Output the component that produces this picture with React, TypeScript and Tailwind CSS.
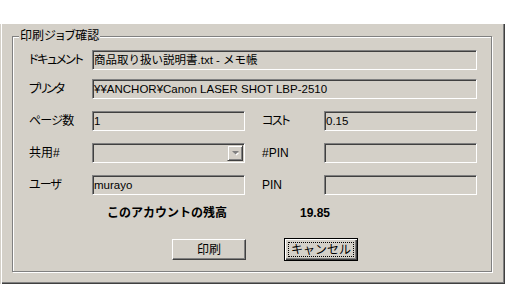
const font = "font-['Liberation_Sans','Noto_Sans_CJK_JP',sans-serif]";

function Label({ children, className = '' }: { children: React.ReactNode; className?: string }): React.ReactElement {
  return (
    <span className={`text-[12px] leading-[14px] text-black whitespace-nowrap [font-feature-settings:'palt'] ${className}`}>
      {children}
    </span>
  );
}

function Field({ value, className = '' }: { value?: string; className?: string }): React.ReactElement {
  return (
    <div
      className={`h-[20px] flex items-center bg-[#d4d0c8] border border-t-[#808080] border-l-[#808080] border-b-white border-r-white shadow-[inset_1px_1px_0_#404040] pl-[1px] text-[11.5px] leading-[14px] text-black whitespace-nowrap overflow-hidden ${className}`}
    >
      {value}
    </div>
  );
}

function ComboField(): React.ReactElement {
  return (
    <div className="h-[20px] flex items-center justify-end bg-[#d4d0c8] border border-t-[#808080] border-l-[#808080] border-b-white border-r-white shadow-[inset_1px_1px_0_#404040] pr-[1px]">
      <div className="w-[16px] h-[16px] flex items-center justify-center border border-t-[#d4d0c8] border-l-[#d4d0c8] border-b-[#404040] border-r-[#404040] shadow-[inset_1px_1px_0_white,inset_-1px_-1px_0_#808080]">
        <svg width="9" height="6" viewBox="0 0 9 6">
          <path d="M2 2 L7 2 L4.5 4.5 Z" fill="#ffffff" transform="translate(1 1)" />
          <path d="M1 1 L8 1 L4.5 4.5 Z" fill="#808080" />
        </svg>
      </div>
    </div>
  );
}

const rowGrid = 'grid grid-cols-[63px_153px_17px_62px_153px] items-center pl-[16px]';

export default function App(): React.ReactElement {
  return (
    <div className={`w-[505px] h-[284px] bg-white ${font}`}>
      <div className="h-[24px]" />
      {/* dialog body */}
      <div className="h-[260px] bg-[#d4d0c8] pt-[12px] pl-[12px] shadow-[inset_1px_0_0_#d4d0c8,inset_2px_0_0_white,inset_-1px_-1px_0_#404040,inset_-2px_-2px_0_#808080]">
        {/* group box */}
        <div className="relative w-[480px] h-[236px] border border-[#808080] shadow-[1px_1px_0_white,inset_1px_1px_0_white] pt-[13px]">
          <span className="absolute -top-[8px] left-[6px] px-[1px] bg-[#d4d0c8] text-[12px] leading-[14px] text-black [font-feature-settings:'palt']">
            印刷ジョブ確認
          </span>

          <div className={rowGrid}>
            <Label className="tracking-[-1.3px]">ドキュメント</Label>
            <Field className="col-span-4" value="商品取り扱い説明書.txt - メモ帳" />
          </div>

          <div className={`${rowGrid} mt-[9px]`}>
            <Label className="tracking-[-2px]">プリンタ</Label>
            <Field className="col-span-4" value="¥¥ANCHOR¥Canon LASER SHOT LBP-2510" />
          </div>

          <div className={`${rowGrid} mt-[12px]`}>
            <Label className="tracking-[-0.8px]">ページ数</Label>
            <Field value="1" />
            <div />
            <Label className="tracking-[-1.5px]">コスト</Label>
            <Field value="0.15" />
          </div>

          <div className={`${rowGrid} mt-[12px]`}>
            <Label>共用#</Label>
            <ComboField />
            <div />
            <Label>#PIN</Label>
            <Field />
          </div>

          <div className={`${rowGrid} mt-[12px]`}>
            <Label className="tracking-[-1px]">ユーザ</Label>
            <Field value="murayo" />
            <div />
            <Label>PIN</Label>
            <Field />
          </div>

          <div className="flex items-center h-[16px] mt-[10px] pl-[94px] text-[12px] leading-[14px] font-bold text-black">
            <span className="w-[193px]">このアカウントの残高</span>
            <span>19.85</span>
          </div>

          <div className="flex items-center h-[23px] mt-[17px] pl-[159px] gap-[38px]">
            <button className="w-[74px] h-[21px] flex items-center justify-center bg-[#d4d0c8] border border-t-white border-l-white border-b-[#404040] border-r-[#404040] shadow-[inset_-1px_-1px_0_#808080] text-[12px] leading-[14px] text-black">
              印刷
            </button>
            <button className="w-[74px] h-[23px] flex p-[3px] bg-[#d4d0c8] border border-black shadow-[inset_1px_1px_0_white,inset_-1px_-1px_0_#404040,inset_-2px_-2px_0_#808080] text-[12px] leading-[14px] text-black">
              <span className="flex-1 flex items-center justify-center border border-dotted border-black">
                キャンセル
              </span>
            </button>
          </div>
        </div>
      </div>
    </div>
  );
}
